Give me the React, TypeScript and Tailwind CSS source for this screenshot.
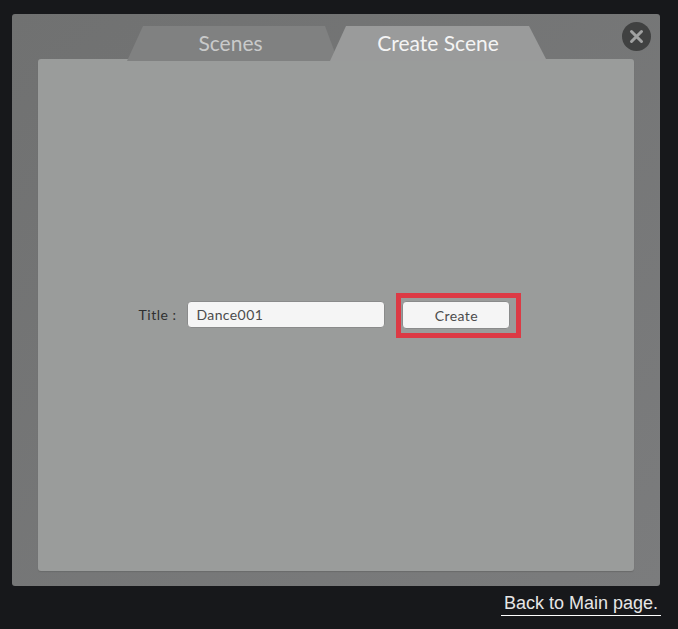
import React from 'react';

const font = '[font-family:Lato,"Open_Sans",sans-serif]';

export default function App() {
  return (
    <div className={`w-[678px] h-[629px] bg-[#17181b] pt-[14px] px-[12px] overflow-hidden ${font}`}>
      {/* Main panel */}
      <div className="relative w-[648px] h-[572px] rounded-[3px] bg-gradient-to-br from-[#707171] to-[#7b7c7d] pt-[12px] px-[26px] flex flex-col">
        {/* Tabs */}
        <div className="flex h-[35px] pl-[89px] shrink-0 relative z-10">
          <div className="w-[211px] h-[35px] bg-[#808181] text-[#c9caca] text-[21px] leading-[33px] text-center pr-[4px] [clip-path:polygon(16px_0,198px_0,211px_35px,0_35px)]">
            Scenes
          </div>
          <div className="w-[216px] -ml-[8px] h-[35px] bg-[#9a9b9b] text-[#f4f4f4] text-[21px] leading-[33px] text-center [clip-path:polygon(16px_0,199px_0,216px_33px,216px_35px,0_35px)]">
            Create Scene
          </div>
        </div>

        {/* Content */}
        <div className="w-[596px] h-[512px] -mt-[2px] rounded-[3px] bg-[#9a9c9b] shadow-[0_1px_1px_#6a6b6b] flex items-center justify-center">
          <div className="flex items-center pr-[12px] pt-[1px]">
            <span className="text-[14px] text-[#2f3030] mr-[11px] mb-[2px] tracking-[0.5px]">Title :</span>
            <div className="w-[198px] h-[27px] mb-[2px] rounded-[4px] bg-[#f5f5f5] border border-[#8a8b8b] text-[14px] text-[#4c4c4c] flex items-center pl-[8px] tracking-[0.4px]">
              Dance001
            </div>
            <div className="ml-[11px] w-[125px] h-[45px] border-[5px] border-[#dc3a45] flex items-start pt-[3px] pl-[1px]">
              <button className="w-[108px] h-[28px] rounded-[4px] bg-[#f5f5f5] border border-[#8a8b8b] text-[14px] text-[#4c4c4c] tracking-[0.4px]">
                Create
              </button>
            </div>
          </div>
        </div>

        {/* Close button */}
        <div className="absolute top-[8px] right-[9px] w-[29px] h-[29px] rounded-full bg-[#404141] flex items-center justify-center">
          <svg width="15" height="15" viewBox="0 0 15 15">
            <path d="M2.5 2.5 L12.5 12.5 M12.5 2.5 L2.5 12.5" stroke="#a0a1a1" strokeWidth="3" strokeLinecap="round" />
          </svg>
        </div>
      </div>

      {/* Footer link */}
      <div className="flex justify-end mt-[6px]">
        <span className="w-[160px] mr-[5px] border-b border-white text-[#e6e6e6] text-[18px] leading-[22px] pb-[1px] text-center [font-family:'Liberation_Sans',Arial,sans-serif]">
          Back to Main page.
        </span>
      </div>
    </div>
  );
}
